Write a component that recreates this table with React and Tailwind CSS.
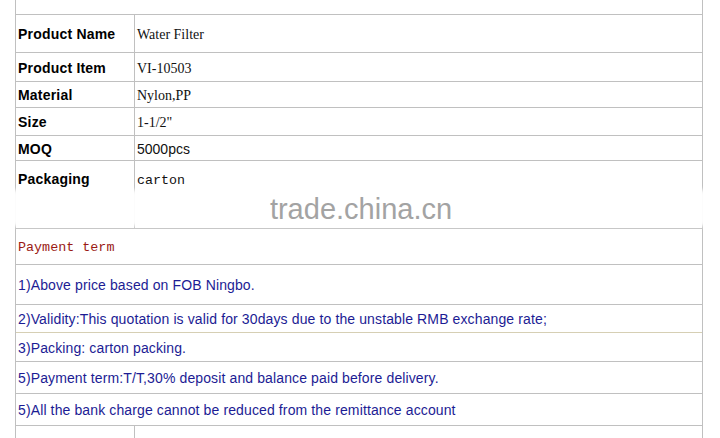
import React from 'react';

const specs = [
  { label: 'Product Name', value: 'Water Filter', kind: 'serif', h: 'h-[38px]' },
  { label: 'Product Item', value: 'VI-10503', kind: 'serif', h: 'h-[29px]' },
  { label: 'Material', value: 'Nylon,PP', kind: 'serif', h: 'h-[26px]' },
  { label: 'Size', value: '1-1/2"', kind: 'serif', h: 'h-[28px]' },
  { label: 'MOQ', value: '5000pcs', kind: 'sans', h: 'h-[25px]' },
];

const terms = [
  { text: '1)Above price based on FOB Ningbo.', h: 'h-[40px]' },
  { text: '2)Validity:This quotation is valid for 30days due to the unstable RMB exchange rate;', h: 'h-[28px]' },
  { text: '3)Packing: carton packing.', h: 'h-[29px]' },
  { text: '5)Payment term:T/T,30% deposit and balance paid before delivery.', h: 'h-[32px]' },
  { text: '5)All the bank charge cannot be reduced from the remittance account', h: 'h-[32px]' },
];

const valueFont = {
  serif: "font-['Liberation_Serif',serif] text-[14px] text-[#111]",
  sans: "font-['Liberation_Sans',Arial,sans-serif] text-[14px] text-[#111]",
};

export default function App() {
  return (
    <div className="relative w-[720px] h-[438px] overflow-hidden bg-white pl-[15px]">
      <div className="w-[688px] border-x border-[#c0c0c0]">
        {/* empty top row */}
        <div className="h-[15px] border-b border-[#c0c0c0]" />

        {specs.map((s) => (
          <div key={s.label} className={`grid grid-cols-[119px_1fr] border-b border-[#c0c0c0] ${s.h}`}>
            <div className="flex items-center border-r border-[#c0c0c0] pl-[2px] pt-[2px] font-['Liberation_Sans',Arial,sans-serif] text-[14px] font-bold tracking-[0.2px] text-black">
              {s.label}
            </div>
            <div className={`flex items-center pl-[2px] pt-[2px] ${valueFont[s.kind]}`}>{s.value}</div>
          </div>
        ))}

        <div className="grid h-[68px] grid-cols-[119px_1fr] border-b border-[#c0c0c0]">
          <div className="border-r border-[#c0c0c0] pl-[2px] pt-[8px] font-['Liberation_Sans',Arial,sans-serif] text-[14px] font-bold tracking-[0.2px] text-black">
            Packaging
          </div>
          <div className="pl-[2px] pt-[10px] font-['Liberation_Mono','Courier_New',monospace] text-[13.3px] text-[#111]">
            carton
          </div>
        </div>

        <div className="flex h-[36px] items-center border-b border-[#c0c0c0] pl-[2px] pt-[4px] font-['Liberation_Mono','Courier_New',monospace] text-[13.4px] text-[#9a1a14]">
          Payment term
        </div>

        {terms.map((t, i) => (
          <div
            key={i}
            className={`flex items-center border-b pl-[2px] pt-[2px] font-['Liberation_Sans',Arial,sans-serif] text-[14px] tracking-[0.12px] text-[#1c1c94] ${t.h} ${i === 1 ? 'border-[#d6cfb4]' : 'border-[#c0c0c0]'}`}
          >
            {t.text}
          </div>
        ))}

        <div className="grid h-[20px] grid-cols-[119px_1fr]">
          <div className="border-r border-[#c0c0c0]" />
          <div />
        </div>
      </div>

      {/* trade.china.cn watermark */}
      <div className="absolute left-[8px] top-[190px] h-[36px] w-[706px]">
        <div className="absolute inset-0 bg-white/95 blur-[2px]" />
        <div className="relative flex h-full items-center justify-center pt-[2px] font-['Liberation_Sans',Arial,sans-serif] text-[29px] leading-none text-[#a3a3a3]">
          trade.china.cn
        </div>
      </div>
    </div>
  );
}
